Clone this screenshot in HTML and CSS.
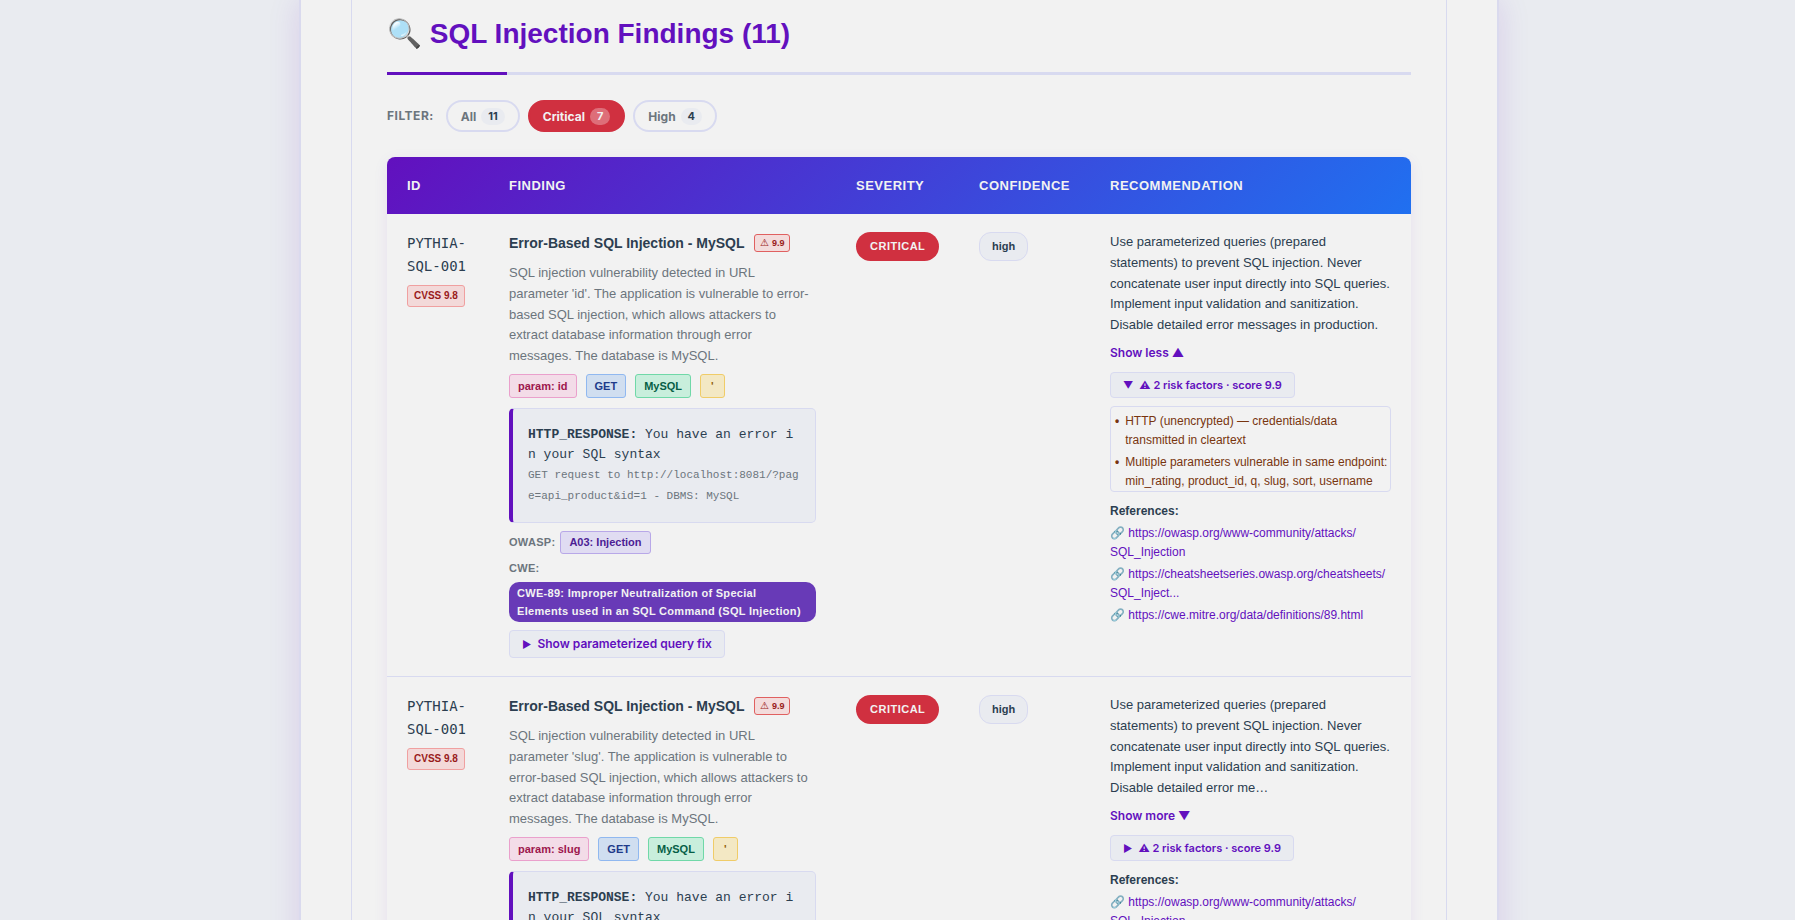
FILE: index.html
```html
<!DOCTYPE html>
<html lang="en">
<head>
  <meta charset="UTF-8">
  <meta name="viewport" content="width=device-width, initial-scale=1.0">
  <title>Pythia - SQL Injection Report</title>
  <link rel="stylesheet" href="styles.css">
</head>
<body>
  <div class="container">
    <section class="section">
      <h2>🔍 SQL Injection Findings (11)</h2>

      <div class="filter-bar">
        <span class="filter-label">Filter:</span>
        <button type="button" class="filter-btn">All <span class="count">11</span></button>
        <button type="button" class="filter-btn active">Critical <span class="count">7</span></button>
        <button type="button" class="filter-btn">High <span class="count">4</span></button>
      </div>

      <table class="findings">
        <colgroup>
          <col class="col-id">
          <col class="col-finding">
          <col class="col-severity">
          <col class="col-confidence">
          <col>
        </colgroup>
        <thead>
          <tr>
            <th>ID</th>
            <th>Finding</th>
            <th>Severity</th>
            <th>Confidence</th>
            <th>Recommendation</th>
          </tr>
        </thead>
        <tbody>
          <tr>
            <td>
              <div class="finding-id">PYTHIA-SQL-001</div>
              <span class="cvss">CVSS 9.8</span>
            </td>
            <td>
              <div class="finding-title"><strong>Error-Based SQL Injection - MySQL</strong><span class="risk-score"><span class="warn">⚠</span> 9.9</span></div>
              <p class="description">SQL injection vulnerability detected in URL parameter 'id'. The application is vulnerable to error-based SQL injection, which allows attackers to extract database information through error messages. The database is MySQL.</p>
              <div class="tags">
                <span class="tag tag-param">param: id</span>
                <span class="tag tag-method">GET</span>
                <span class="tag tag-db">MySQL</span>
                <span class="tag tag-payload">'</span>
              </div>
              <div class="evidence">
                <div><strong>HTTP_RESPONSE:</strong> You have an error in your SQL syntax</div>
                <small>GET request to http://localhost:8081/?page=api_product&amp;id=1 - DBMS: MySQL</small>
              </div>
              <div class="meta-row"><span class="meta-label">OWASP:</span><span class="tag tag-owasp">A03: Injection</span></div>
              <div class="meta-row"><span class="meta-label">CWE:</span><span class="cwe">CWE-89: Improper Neutralization of Special Elements used in an SQL Command (SQL Injection)</span></div>
              <button type="button" class="toggle"><span class="arrow">▶</span>Show parameterized query fix</button>
            </td>
            <td><span class="severity">Critical</span></td>
            <td><span class="confidence">high</span></td>
            <td>
              <p class="recommendation">Use parameterized queries (prepared statements) to prevent SQL injection. Never concatenate user input directly into SQL queries. Implement input validation and sanitization. Disable detailed error messages in production.</p>
              <button type="button" class="show-more">Show less ▲</button>
              <button type="button" class="toggle toggle-risk"><span class="arrow">▼</span>⚠ 2 risk factors · score 9.9</button>
              <ul class="risk-list">
                <li>HTTP (unencrypted) — credentials/data transmitted in cleartext</li>
                <li>Multiple parameters vulnerable in same endpoint: min_rating, product_id, q, slug, sort, username</li>
              </ul>
              <div class="references">
                <strong>References:</strong>
                <a href="https://owasp.org/www-community/attacks/SQL_Injection">🔗 https://owasp.org/www-community/attacks/<wbr>SQL_Injection</a>
                <a href="https://cheatsheetseries.owasp.org/cheatsheets/SQL_Injection_Prevention_Cheat_Sheet.html">🔗 https://cheatsheetseries.owasp.org/cheatsheets/<wbr>SQL_Inject...</a>
                <a href="https://cwe.mitre.org/data/definitions/89.html">🔗 https://cwe.mitre.org/data/definitions/89.html</a>
              </div>
            </td>
          </tr>
          <tr>
            <td>
              <div class="finding-id">PYTHIA-SQL-001</div>
              <span class="cvss">CVSS 9.8</span>
            </td>
            <td>
              <div class="finding-title"><strong>Error-Based SQL Injection - MySQL</strong><span class="risk-score"><span class="warn">⚠</span> 9.9</span></div>
              <p class="description">SQL injection vulnerability detected in URL parameter 'slug'. The application is vulnerable to error-based SQL injection, which allows attackers to extract database information through error messages. The database is MySQL.</p>
              <div class="tags">
                <span class="tag tag-param">param: slug</span>
                <span class="tag tag-method">GET</span>
                <span class="tag tag-db">MySQL</span>
                <span class="tag tag-payload">'</span>
              </div>
              <div class="evidence">
                <div><strong>HTTP_RESPONSE:</strong> You have an error in your SQL syntax</div>
              </div>
            </td>
            <td><span class="severity">Critical</span></td>
            <td><span class="confidence">high</span></td>
            <td>
              <p class="recommendation">Use parameterized queries (prepared statements) to prevent SQL injection. Never concatenate user input directly into SQL queries. Implement input validation and sanitization. Disable detailed error me…</p>
              <button type="button" class="show-more">Show more ▼</button>
              <button type="button" class="toggle toggle-risk"><span class="arrow">▶</span>⚠ 2 risk factors · score 9.9</button>
              <div class="references">
                <strong>References:</strong>
                <a href="https://owasp.org/www-community/attacks/SQL_Injection">🔗 https://owasp.org/www-community/attacks/<wbr>SQL_Injection</a>
              </div>
            </td>
          </tr>
        </tbody>
      </table>
    </section>
  </div>
</body>
</html>
```
FILE: styles.css
```css
* {
  box-sizing: border-box;
}
html {
  overflow: hidden;
}
body {
  margin: 0;
  padding-left: 3px;
  font-family: "Liberation Sans", Arial, sans-serif;
  font-size: 16px;
  line-height: 1.6;
  color: #2c3e50;
  background: #e9ebf0;
}
button {
  font-family: Inter, sans-serif;
  cursor: pointer;
}

/* Page shell */
.container {
  max-width: 1200px;
  margin: 0 auto;
  padding: 0 50px;
  background: #f2f2f2;
  border: 2px solid #dadaee;
  border-width: 0 2px;
  box-shadow: 0 0 30px rgba(98, 16, 190, 0.13);
}
.section {
  padding: 11px 35px 35px;
  border: 1px solid #d8daf0;
  border-width: 0 1px;
}
h2 {
  position: relative;
  margin: 0 0 25px;
  padding-bottom: 15px;
  font-size: 28px;
  line-height: 46px;
  color: #6210be;
  border-bottom: 3px solid #d8daf0;
}
h2::after {
  content: "";
  position: absolute;
  left: 0;
  bottom: -3px;
  width: 120px;
  height: 3px;
  background: #6210be;
}

/* Filters */
.filter-bar {
  display: flex;
  align-items: center;
  gap: 8px;
  margin-bottom: 25px;
}
.filter-label {
  margin-right: 4px;
  font-family: Inter, sans-serif;
  font-size: 12px;
  font-weight: 700;
  letter-spacing: 0.5px;
  text-transform: uppercase;
  color: #6c757d;
}
.filter-btn {
  display: flex;
  align-items: center;
  gap: 5px;
  height: 32px;
  padding: 0 13px;
  font-size: 12px;
  font-weight: 700;
  color: #6c757d;
  background: transparent;
  border: 2px solid #d8daf0;
  border-radius: 16px;
}
.filter-btn.active {
  color: #f2f2f2;
  background: #d03040;
  border-color: #d03040;
}
.count {
  padding: 0 7px;
  font-size: 11px;
  font-weight: 700;
  line-height: 17px;
  color: #2c3e50;
  background: #e9ebf0;
  border-radius: 10px;
}
.active .count {
  color: #f2f2f2;
  background: rgba(255, 255, 255, 0.3);
}

/* Findings table */
.findings {
  width: 100%;
  table-layout: fixed;
  border-collapse: separate;
  border-spacing: 0;
  border-radius: 8px;
  box-shadow: 0 4px 15px rgba(98, 16, 190, 0.08);
}
.col-id { width: 102px; }
.col-finding { width: 347px; }
.col-severity { width: 123px; }
.col-confidence { width: 131px; }
thead {
  background: linear-gradient(135deg, #6210be, #2070f0);
}
th {
  padding: 18px 20px;
  font-size: 13px;
  line-height: 21px;
  letter-spacing: 0.5px;
  text-align: left;
  text-transform: uppercase;
  color: #f2f2f2;
}
th:first-child { border-top-left-radius: 8px; }
th:last-child { border-top-right-radius: 8px; }
td {
  padding: 18px 20px;
  vertical-align: top;
  font-size: 13px;
  border-bottom: 1px solid #d8daf0;
}
.finding-id {
  font-family: "DejaVu Sans Mono", monospace;
  font-size: 14px;
  line-height: 23px;
}
.cvss {
  display: inline-block;
  margin-top: 7px;
  padding: 0 6px;
  font-size: 10px;
  font-weight: 700;
  line-height: 20px;
  color: #991b1b;
  background: #f3d9d9;
  border: 1px solid #f0a0a0;
  border-radius: 3px;
}
.finding-title {
  display: flex;
  align-items: center;
  gap: 10px;
  margin-bottom: 9px;
  font-size: 14px;
  line-height: 22px;
}
.risk-score {
  padding: 0 5px;
  font-size: 9px;
  font-weight: 700;
  line-height: 16px;
  color: #991b1b;
  background: #f3dcdc;
  border: 1px solid #e06060;
  border-radius: 3px;
}
.warn {
  font-size: 10px;
  font-weight: 400;
}
.description,
.recommendation {
  margin: 0;
  font-size: 13px;
  line-height: 1.6;
}
.description {
  color: #6c757d;
}
.tags {
  display: flex;
  gap: 9px;
  margin: 7px 0 10px;
}
.tag {
  padding: 0 8px;
  font-size: 11px;
  font-weight: 700;
  line-height: 22px;
  border: 1px solid;
  border-radius: 3px;
}
.tag-param { color: #9d174d; background: #f3dce8; border-color: #eaa0cc; }
.tag-method { color: #1e3a8a; background: #d0def0; border-color: #90b8f0; }
.tag-db { color: #065f46; background: #c8eedc; border-color: #70d8a8; }
.tag-payload { padding: 0 10px; color: #92600e; background: #f3e8c4; border-color: #f0cc68; }
.tag-owasp { line-height: 21px; color: #4c1d95; background: #e0dcf2; border-color: #b8a8e8; }
.evidence {
  margin-bottom: 8px;
  padding: 16px 16px 15px 15px;
  font-family: "Liberation Mono", monospace;
  font-size: 13px;
  line-height: 20px;
  word-break: break-all;
  background: #e9ebf0;
  border: 1px solid #d8daf0;
  border-left: 4px solid #6210be;
  border-radius: 5px;
}
.evidence small {
  display: block;
  font-size: 11px;
  line-height: 21px;
  color: #6c757d;
}
.meta-row {
  display: flex;
  flex-wrap: wrap;
  align-items: center;
  gap: 5px;
  margin-bottom: 5px;
}
.meta-label {
  font-size: 11px;
  font-weight: 700;
  line-height: 18px;
  letter-spacing: 0.3px;
  color: #6c757d;
}
.cwe {
  padding: 2px 8px;
  font-size: 11px;
  font-weight: 700;
  line-height: 18px;
  letter-spacing: 0.3px;
  color: #f2f2f2;
  background: #683ab7;
  border-radius: 10px;
}
.severity {
  display: inline-block;
  padding: 0 14px;
  font-size: 11px;
  font-weight: 700;
  line-height: 29px;
  letter-spacing: 0.5px;
  text-transform: uppercase;
  color: #f2f2f2;
  background: #d03040;
  border-radius: 15px;
}
.confidence {
  display: inline-block;
  padding: 0 12px;
  font-size: 11px;
  font-weight: 700;
  line-height: 27px;
  background: #e9ebf0;
  border: 1px solid #d8daf0;
  border-radius: 12px;
}
.toggle {
  display: block;
  margin-top: 8px;
  padding: 0 12px;
  font-size: 12px;
  font-weight: 600;
  line-height: 25px;
  color: #6210be;
  background: #e9ebf0;
  border: 1px solid #d8daf0;
  border-radius: 4px;
}
.toggle-risk {
  font-size: 11px;
  line-height: 24px;
}
.arrow {
  display: inline-block;
  margin-right: 6px;
  font-size: 10px;
}
.show-more {
  display: block;
  margin-top: 6px;
  padding: 0;
  font-size: 12px;
  font-weight: 600;
  line-height: 22px;
  color: #6210be;
  background: none;
  border: none;
}
.risk-list {
  margin: 8px 0 0;
  padding: 5px 0 0 4px;
  font-size: 12px;
  line-height: 19px;
  list-style: none;
  color: #78350f;
  border: 1px solid #d8daf0;
  border-radius: 4px;
}
.risk-list li {
  display: flex;
  gap: 6px;
}
.risk-list li::before {
  content: "•";
  font-weight: 700;
}
.risk-list li + li {
  margin-top: 3px;
}
.references {
  margin-top: 10px;
  font-size: 12px;
  line-height: 19px;
}
.references strong,
.references a {
  display: block;
  margin-bottom: 3px;
}
.references a {
  color: #6210be;
  text-decoration: none;
}
```
